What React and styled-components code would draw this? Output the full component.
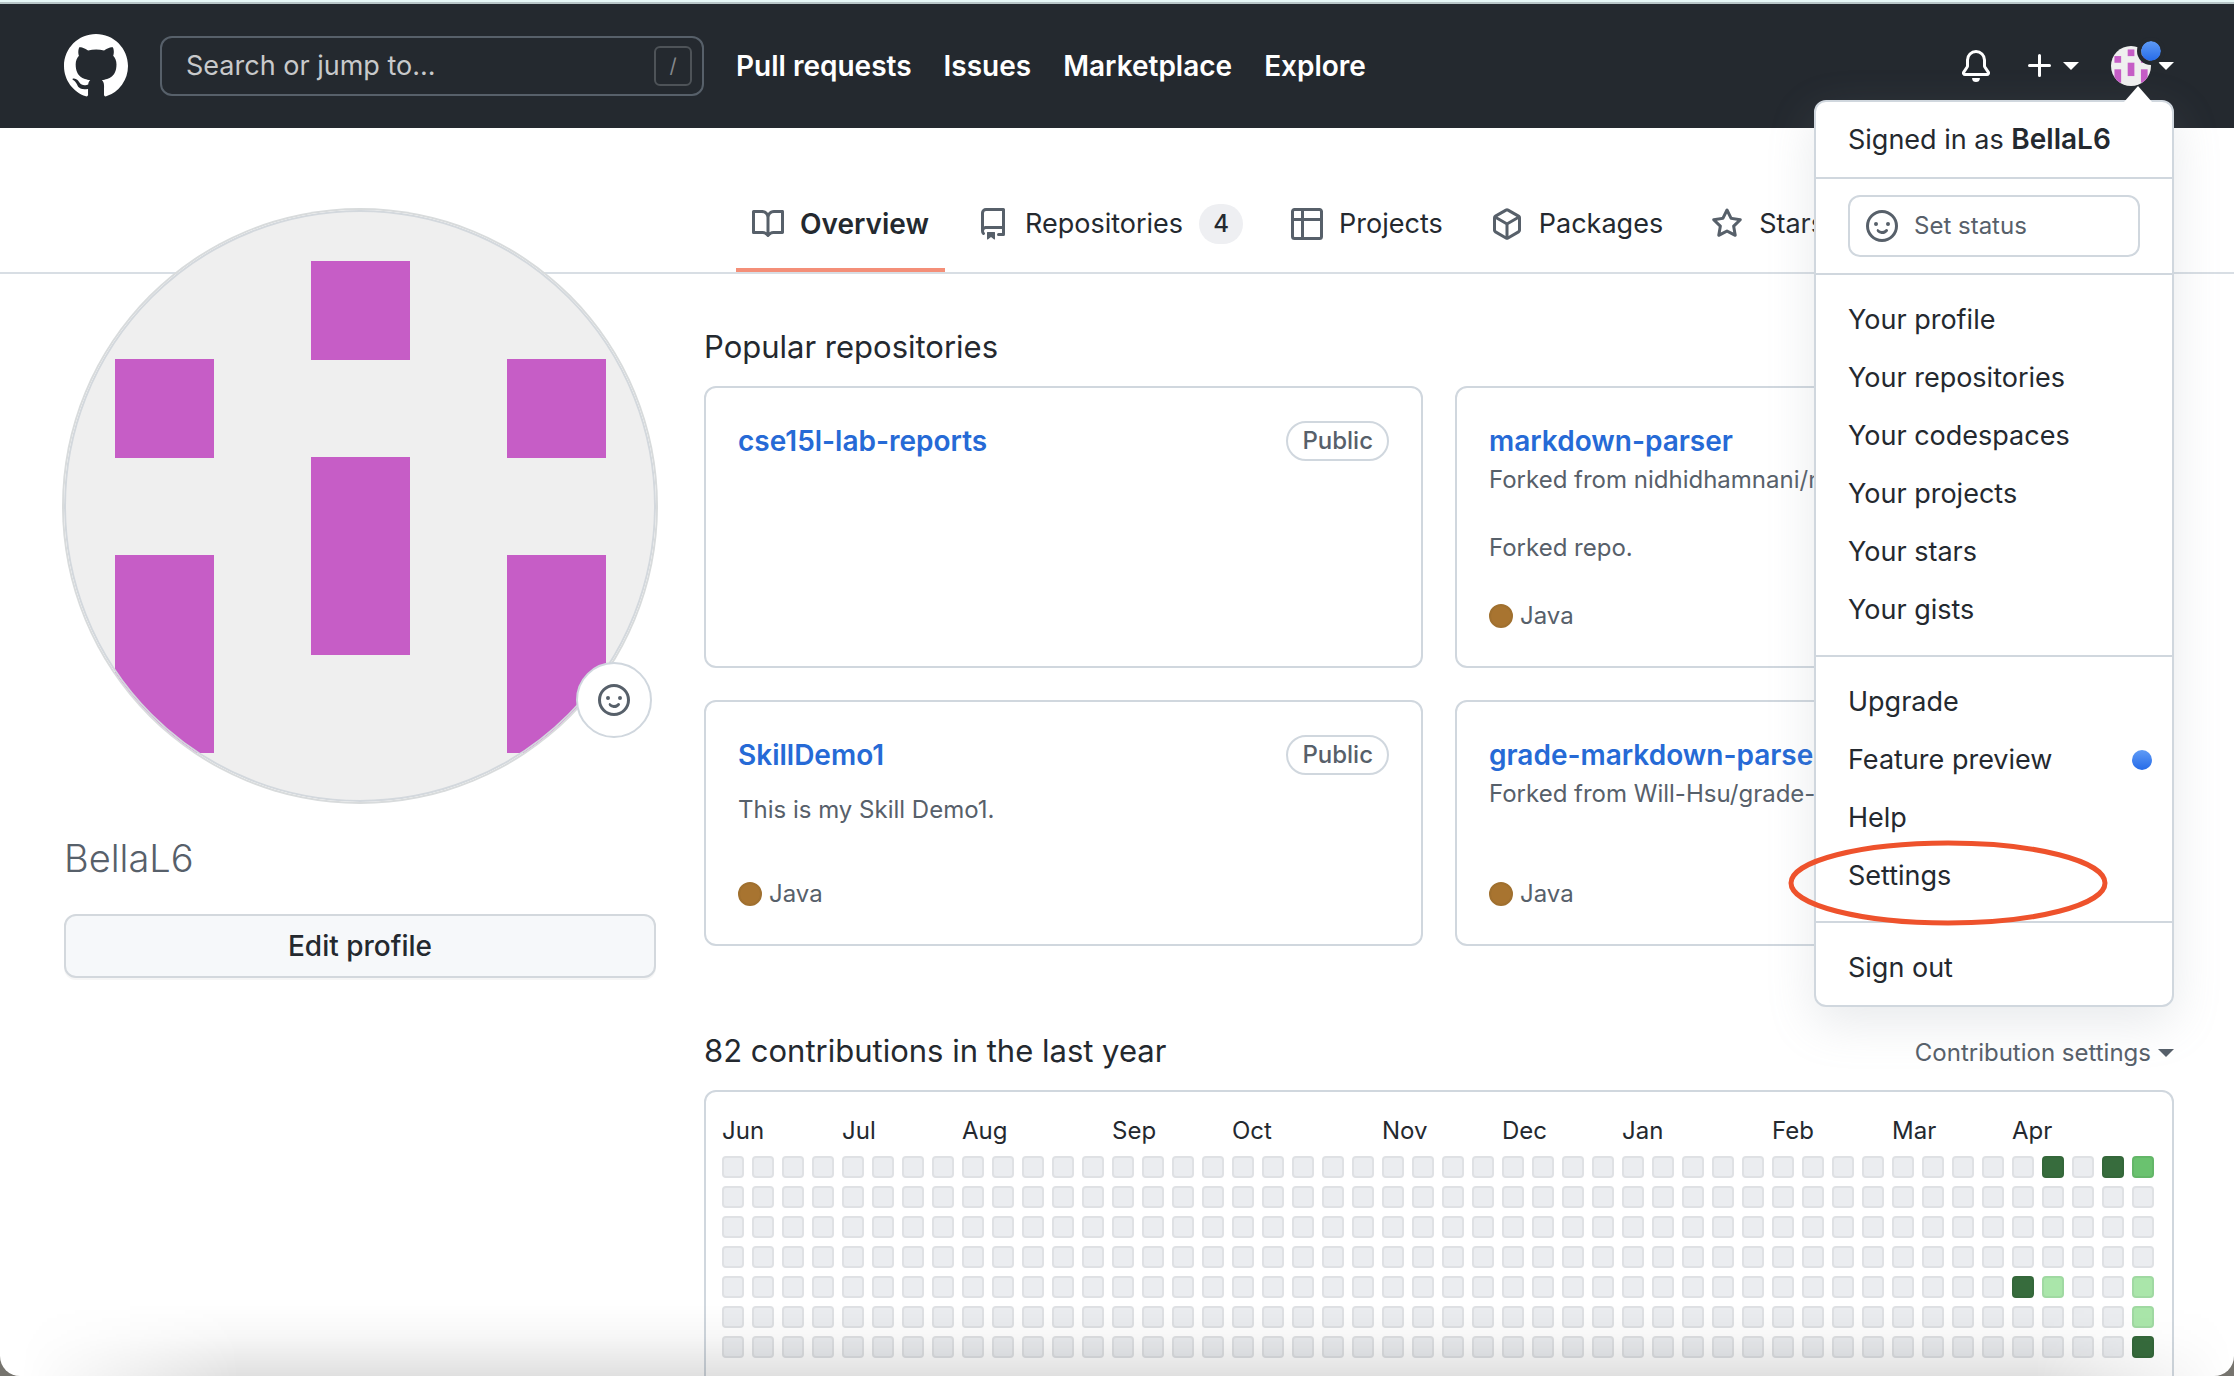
import React from "react";
import styled, { createGlobalStyle } from "styled-components";

const color = {
  ink: "#24292f",
  muted: "#57606a",
  line: "#d0d7de",
  link: "#266ad6",
  identicon: "#c65dc6",
};

const GlobalStyle = createGlobalStyle`
  *, *::before, *::after { box-sizing: border-box; }
  body {
    margin: 0;
    background: #76746e;
    color: ${color.ink};
    font-family: Inter, "Liberation Sans", sans-serif;
    font-size: 27px;
    line-height: 42px;
  }
  a { color: inherit; text-decoration: none; }
  button, input { font: inherit; color: inherit; }
  h1, h2, p, ul { margin: 0; padding: 0; font-weight: 400; }
  ul { list-style: none; }
`;

const Window = styled.div`
  position: relative;
  height: 100vh;
  overflow: hidden;
  background: #fff;
  border-radius: 0 0 20px 20px;
`;

const WindowShade = styled.div`
  position: absolute;
  left: 0;
  right: 0;
  bottom: 0;
  height: 72px;
  pointer-events: none;
  background: linear-gradient(rgba(0, 0, 0, 0), rgba(0, 0, 0, 0.03) 45%, rgba(0, 0, 0, 0.12));
  mask-image: linear-gradient(90deg, transparent 20px, #000 240px, #000 calc(100% - 200px), transparent);
`;

const Svg = styled.svg`
  display: block;
  flex: none;
  fill: currentColor;
`;

const paths = {
  mark: "M8 0C3.58 0 0 3.58 0 8c0 3.54 2.29 6.53 5.47 7.59.4.07.55-.17.55-.38 0-.19-.01-.82-.01-1.49-2.01.37-2.53-.49-2.69-.94-.09-.23-.48-.94-.82-1.13-.28-.15-.68-.52-.01-.53.63-.01 1.08.58 1.23.82.72 1.21 1.87.87 2.33.66.07-.52.28-.87.51-1.07-1.78-.2-3.64-.89-3.64-3.95 0-.87.31-1.59.82-2.15-.08-.2-.36-1.02.08-2.12 0 0 .67-.21 2.2.82.64-.18 1.32-.27 2-.27.68 0 1.36.09 2 .27 1.53-1.04 2.2-.82 2.2-.82.44 1.1.16 1.92.08 2.12.51.56.82 1.27.82 2.15 0 3.07-1.87 3.75-3.65 3.95.29.25.54.73.54 1.48 0 1.07-.01 1.93-.01 2.2 0 .21.15.46.55.38A8.013 8.013 0 0016 8c0-4.42-3.58-8-8-8z",
  book: "M0 1.75A.75.75 0 01.75 1h4.253c1.227 0 2.317.59 3 1.501A3.744 3.744 0 0111.006 1h4.245a.75.75 0 01.75.75v10.5a.75.75 0 01-.75.75h-4.507a2.25 2.25 0 00-1.591.659l-.622.621a.75.75 0 01-1.06 0l-.622-.621A2.25 2.25 0 005.258 13H.75a.75.75 0 01-.75-.75V1.75zm8.755 3a2.25 2.25 0 012.25-2.25H14.5v9h-3.757c-.71 0-1.4.201-1.992.572l.004-7.322zm-1.504 7.324l.004-5.073-.002-2.253A2.25 2.25 0 005.003 2.5H1.5v9h3.757a3.75 3.75 0 011.994.574z",
  repo: "M2 2.5A2.5 2.5 0 014.5 0h8.75a.75.75 0 01.75.75v12.5a.75.75 0 01-.75.75h-2.5a.75.75 0 110-1.5h1.75v-2h-8a1 1 0 00-.714 1.7.75.75 0 01-1.072 1.05A2.495 2.495 0 012 11.5v-9zm10.5-1V9h-8c-.356 0-.694.074-1 .208V2.5a1 1 0 011-1h8zM5 12.25v3.25a.25.25 0 00.4.2l1.45-1.087a.25.25 0 01.3 0L8.6 15.7a.25.25 0 00.4-.2v-3.25a.25.25 0 00-.25-.25h-3.5a.25.25 0 00-.25.25z",
  table: "M0 1.75C0 .784.784 0 1.75 0h12.5C15.216 0 16 .784 16 1.75v3.585a.746.746 0 010 .83v8.085A1.75 1.75 0 0114.25 16H6.309a.748.748 0 01-1.118 0H1.75A1.75 1.75 0 010 14.25V6.165a.746.746 0 010-.83V1.75zM1.5 6.5v7.75c0 .138.112.25.25.25H5v-8H1.5zM6.5 6.5v8h7.75a.25.25 0 00.25-.25V6.5h-8zM14.5 5V1.75a.25.25 0 00-.25-.25H6.5V5h8zM5 5V1.5H1.75a.25.25 0 00-.25.25V5H5z",
  package: "M8.878.392a1.75 1.75 0 00-1.756 0l-5.25 3.045A1.75 1.75 0 001 4.951v6.098c0 .624.332 1.2.872 1.514l5.25 3.045a1.75 1.75 0 001.756 0l5.25-3.045c.54-.313.872-.89.872-1.514V4.951c0-.624-.332-1.2-.872-1.514L8.878.392zM7.875 1.69a.25.25 0 01.25 0l4.63 2.685L8 7.133 3.245 4.375l4.63-2.685zM2.5 5.677v5.372c0 .09.047.171.125.216l4.625 2.683V8.432L2.5 5.677zm6.25 8.271l4.625-2.683a.25.25 0 00.125-.216V5.677L8.75 8.432v5.516z",
  star: "M8 .25a.75.75 0 01.673.418l1.882 3.815 4.21.612a.75.75 0 01.416 1.279l-3.046 2.97.719 4.192a.75.75 0 01-1.088.791L8 12.347l-3.766 1.98a.75.75 0 01-1.088-.79l.72-4.194L.818 6.374a.75.75 0 01.416-1.28l4.21-.611L7.327.668A.75.75 0 018 .25zm0 2.445L6.615 5.5a.75.75 0 01-.564.41l-3.097.45 2.24 2.184a.75.75 0 01.216.664l-.528 3.084 2.769-1.456a.75.75 0 01.698 0l2.77 1.456-.53-3.084a.75.75 0 01.216-.664l2.24-2.183-3.096-.45a.75.75 0 01-.564-.41L8 2.694v.001z",
  bell: "M8 16a2 2 0 001.985-1.75c.017-.137-.097-.25-.235-.25h-3.5c-.138 0-.252.113-.235.25A2 2 0 008 16zM8 1.5A3.5 3.5 0 004.5 5v2.947c0 .346-.102.683-.294.97l-1.703 2.556a.018.018 0 00-.003.01l.001.006c0 .002.002.004.004.006a.017.017 0 00.006.004l.007.001h10.964l.007-.001a.016.016 0 00.006-.004.016.016 0 00.004-.006l.001-.007a.017.017 0 00-.003-.01l-1.703-2.554a1.75 1.75 0 01-.294-.97V5A3.5 3.5 0 008 1.5zM3 5a5 5 0 0110 0v2.947c0 .05.015.098.042.139l1.703 2.555A1.518 1.518 0 0113.482 13H2.518a1.518 1.518 0 01-1.263-2.36l1.703-2.554A.25.25 0 003 7.947V5z",
  plus: "M7.75 2a.75.75 0 01.75.75V7h4.25a.75.75 0 110 1.5H8.5v4.25a.75.75 0 11-1.5 0V8.5H2.75a.75.75 0 010-1.5H7V2.75A.75.75 0 017.75 2z",
  smiley: "M1.5 8a6.5 6.5 0 1113 0 6.5 6.5 0 01-13 0zM8 0a8 8 0 100 16A8 8 0 008 0zM5 8a1 1 0 100-2 1 1 0 000 2zm7-1a1 1 0 11-2 0 1 1 0 012 0zM5.32 9.636a.75.75 0 011.038.175l.007.009c.103.118.22.222.35.31.264.178.683.37 1.285.37.602 0 1.02-.192 1.285-.371.13-.088.247-.192.35-.31l.007-.008a.75.75 0 111.222.87c-.1.14-.2.25-.34.38-.16.13-.2.18-.37.3-.63.418-1.05.629-1.807.629-.946 0-1.652-.308-2.126-.63a3.3 3.3 0 01-.715-.657l-.02-.03a.75.75 0 01.183-1.044z",
};

function Icon({ name, size = 32 }) {
  return (
    <Svg viewBox="0 0 16 16" width={size} height={size} fillRule="evenodd" aria-hidden="true">
      <path d={paths[name]} />
    </Svg>
  );
}

function Identicon({ size }) {
  return (
    <Svg viewBox="0 0 592 592" width={size} height={size} aria-hidden="true">
      <rect width="592" height="592" fill="#efefef" />
      <g fill={color.identicon}>
        <rect x="247" y="51" width="99" height="99" />
        <rect x="51" y="149" width="99" height="99" />
        <rect x="443" y="149" width="99" height="99" />
        <rect x="247" y="247" width="99" height="198" />
        <rect x="51" y="345" width="99" height="198" />
        <rect x="443" y="345" width="99" height="198" />
      </g>
    </Svg>
  );
}

const Caret = styled.span`
  flex: none;
  border: 8px solid transparent;
  border-top-color: currentColor;
  border-bottom: 0;
`;

const Header = styled.header`
  position: relative;
  z-index: 2;
  display: flex;
  align-items: center;
  gap: 32px;
  height: 128px;
  padding: 0 60px 0 64px;
  color: #fff;
  background: linear-gradient(#e6f7f6 0 2px, #b7c5c7 2px 4px, #24292f 4px);
  border-top: 4px solid transparent;
  background-origin: border-box;
`;

const Search = styled.label`
  display: flex;
  align-items: center;
  width: 544px;
  height: 60px;
  padding: 0 10px 0 24px;
  border: 2px solid #57606a;
  border-radius: 12px;
`;

const SearchInput = styled.input`
  flex: 1;
  min-width: 0;
  padding: 0;
  border: 0;
  outline: 0;
  background: none;
  &::placeholder { color: #c8c9cb; opacity: 1; }
`;

const Key = styled.kbd`
  display: grid;
  place-items: center;
  width: 38px;
  height: 40px;
  border: 2px solid #4e5358;
  border-radius: 6px;
  color: #84888c;
  font-family: inherit;
  font-size: 20px;
  line-height: 36px;
`;

const SiteNav = styled.nav`
  display: flex;
  gap: 32px;
  font-size: 28px;
  font-weight: 600;
`;

const Tools = styled.div`
  display: flex;
  align-items: center;
  gap: 32px;
  margin-left: auto;
`;

const ToolButton = styled.button`
  position: relative;
  display: flex;
  align-items: center;
  gap: 7px;
  padding: 0;
  border: 0;
  background: none;
  color: #fff;
`;

const SmallAvatar = styled.span`
  overflow: hidden;
  border-radius: 50%;
`;

const dotFill = "linear-gradient(#5f9bf6, #266be8)";

const Unread = styled.span`
  position: absolute;
  top: -9px;
  left: 26px;
  width: 28px;
  height: 28px;
  border: 4px solid #24292f;
  border-radius: 50%;
  background: ${dotFill} padding-box;
`;

const Menu = styled.div`
  position: absolute;
  top: 96px;
  right: 60px;
  width: 360px;
  border: 2px solid ${color.line};
  border-radius: 12px;
  background: #fff;
  color: ${color.ink};
  box-shadow: 0 16px 48px rgba(140, 149, 159, 0.2);
  &::before {
    content: "";
    position: absolute;
    top: -16px;
    right: 20px;
    border: 14px solid transparent;
    border-top: 0;
    border-bottom: 16px solid #fff;
  }
`;

const MenuSection = styled.div`
  padding: ${(p) => p.$pad};
  & + & { border-top: 2px solid ${color.line}; }
`;

const MenuItem = styled.a`
  display: flex;
  align-items: center;
  justify-content: space-between;
  padding: 8px 20px 8px 32px;
`;

const SignedIn = styled.p`
  padding: 8px 32px;
  strong {
    font-size: 28px;
    font-weight: 600;
  }
`;

const StatusButton = styled.button`
  display: flex;
  align-items: center;
  gap: 16px;
  width: 100%;
  height: 62px;
  padding: 0 16px;
  border: 2px solid ${color.line};
  border-radius: 12px;
  background: #fff;
  color: ${color.muted};
  font-size: 24px;
`;

const Dot = styled.span`
  width: 20px;
  height: 20px;
  border-radius: 50%;
  background: ${dotFill};
`;

const Circled = styled.svg`
  position: absolute;
  left: -28px;
  top: 738px;
  pointer-events: none;
`;

const TabBar = styled.nav`
  display: flex;
  align-items: flex-end;
  gap: 16px;
  height: 146px;
  padding-left: 736px;
  border-bottom: 2px solid #d8dee4;
`;

const Tab = styled.a`
  display: flex;
  align-items: center;
  gap: 16px;
  height: 96px;
  padding: 0 16px;
  border: solid transparent;
  border-width: 4px 0;
  border-bottom-color: ${(p) => (p.$active ? "#f48f78" : "transparent")};
  font-size: ${(p) => (p.$active ? 28 : 27)}px;
  font-weight: ${(p) => (p.$active ? 600 : 400)};
  svg { color: ${color.muted}; }
`;

const Counter = styled.span`
  min-width: 44px;
  padding: 0 12px;
  border-radius: 20px;
  background: #eeeff2;
  font-size: 24px;
  font-weight: 500;
  line-height: 40px;
  text-align: center;
`;

const Page = styled.main`
  display: grid;
  grid-template-columns: 592px minmax(0, 1fr);
  gap: 48px;
  padding: 0 60px 0 64px;
`;

const Profile = styled.aside`
  margin-top: -64px;
`;

const Portrait = styled.div`
  position: relative;
`;

const PortraitImage = styled.div`
  position: relative;
  overflow: hidden;
  border-radius: 50%;
  box-shadow: 0 0 0 2px #d8dbdc;
  &::after {
    content: "";
    position: absolute;
    inset: 0;
    border: 2px solid #d3d8dd;
    border-radius: 50%;
  }
`;

const Mood = styled.button`
  position: absolute;
  right: 4px;
  bottom: 64px;
  display: grid;
  place-items: center;
  width: 76px;
  height: 76px;
  padding: 0;
  border: 2px solid ${color.line};
  border-radius: 50%;
  background: #fff;
  color: ${color.muted};
`;

const UserName = styled.h1`
  padding: 32px 0;
  color: ${color.muted};
  font-size: 38px;
  font-weight: 300;
  line-height: 48px;
`;

const EditButton = styled.button`
  width: 100%;
  height: 64px;
  border: 2px solid #d3d8dd;
  border-radius: 12px;
  background: #f6f8fa;
  box-shadow: 0 2px 0 rgba(27, 31, 36, 0.04);
  font-size: 28px;
  font-weight: 500;
`;

const Content = styled.div`
  padding-top: 48px;
`;

const SectionTitle = styled.h2`
  font-size: 31px;
  line-height: 50px;
`;

const Cards = styled.ul`
  display: grid;
  grid-template-columns: repeat(2, minmax(0, 1fr));
  gap: 32px;
  margin: 14px 0 80px;
`;

const Card = styled.li`
  display: flex;
  flex-direction: column;
  padding: 32px;
  border: 2px solid ${color.line};
  border-radius: 12px;
  color: ${color.muted};
  font-size: 24px;
  line-height: 36px;
`;

const CardHead = styled.div`
  display: flex;
  align-items: center;
  justify-content: space-between;
  height: 42px;
`;

const RepoLink = styled.a`
  color: ${color.link};
  font-size: 28px;
  font-weight: 600;
`;

const Badge = styled.span`
  padding: 0 14px;
  border: 2px solid ${color.line};
  border-radius: 20px;
  font-weight: 500;
`;

const Forked = styled.p`
  margin-bottom: 16px;
  white-space: nowrap;
`;

const Description = styled.p`
  flex: 1;
  margin: 16px 0 32px;
`;

const Language = styled.p`
  display: flex;
  align-items: center;
  gap: 7px;
  &::before {
    content: "";
    width: 24px;
    height: 24px;
    border: 2px solid #a0702f;
    border-radius: 50%;
    background: #a87430;
  }
`;

const SectionHead = styled.div`
  display: flex;
  align-items: flex-end;
  justify-content: space-between;
`;

const QuietButton = styled.button`
  display: flex;
  align-items: center;
  gap: 7px;
  padding: 0;
  border: 0;
  background: none;
  color: ${color.muted};
  font-size: 24px;
  line-height: 46px;
`;

const CalendarBox = styled.div`
  margin-top: 14px;
  padding: 14px 8px 80px;
  border: 2px solid ${color.line};
  border-radius: 12px;
`;

const Calendar = styled.table`
  border-spacing: 8px;
  font-size: 24px;
  line-height: 34px;
  th {
    padding: 0;
    font-weight: 400;
    text-align: left;
  }
`;

const levels = [
  ["#ebedf0", "#dfe1e4"],
  ["#aae6aa", "#a0d9a2"],
  ["#6ac26f", "#63b668"],
  ["#376c3d", "#34673a"],
];

const Day = styled.td`
  width: 22px;
  min-width: 22px;
  height: 22px;
  padding: 0;
  border: 2px solid ${(p) => levels[p.$level][1]};
  border-radius: 4px;
  background: ${(p) => levels[p.$level][0]};
`;

const months = [
  ["Jun", 4], ["Jul", 4], ["Aug", 5], ["Sep", 4], ["Oct", 5], ["Nov", 4],
  ["Dec", 4], ["Jan", 5], ["Feb", 4], ["Mar", 4], ["Apr", 5],
];

const activity = {
  "0-44": 3, "0-46": 3, "0-47": 2,
  "4-43": 3, "4-44": 1, "4-47": 1,
  "5-47": 1, "6-47": 3,
};

const tabs = [
  { icon: "book", label: "Overview", active: true },
  { icon: "repo", label: "Repositories", count: 4 },
  { icon: "table", label: "Projects" },
  { icon: "package", label: "Packages" },
  { icon: "star", label: "Stars" },
];

const repos = [
  { name: "cse15l-lab-reports", badge: "Public" },
  { name: "markdown-parser", forked: "nidhidhamnani/m", text: "Forked repo.", language: "Java" },
  { name: "SkillDemo1", badge: "Public", text: "This is my Skill Demo1.", language: "Java" },
  { name: "grade-markdown-parse", forked: "Will-Hsu/grade-", language: "Java" },
];

const range = (n) => Array.from({ length: n }, (_, i) => i);

function AccountMenu() {
  return (
    <Menu>
      <MenuSection $pad="8px 0">
        <SignedIn>Signed in as <strong>BellaL6</strong></SignedIn>
      </MenuSection>
      <MenuSection $pad="16px 32px">
        <StatusButton type="button"><Icon name="smiley" />Set status</StatusButton>
      </MenuSection>
      <MenuSection $pad="16px 0">
        {["profile", "repositories", "codespaces", "projects", "stars", "gists"].map((item) => (
          <MenuItem key={item} href="#">{`Your ${item}`}</MenuItem>
        ))}
      </MenuSection>
      <MenuSection $pad="16px 0">
        <MenuItem href="#">Upgrade</MenuItem>
        <MenuItem href="#">Feature preview<Dot /></MenuItem>
        <MenuItem href="#">Help</MenuItem>
        <MenuItem href="#">Settings</MenuItem>
      </MenuSection>
      <MenuSection $pad="16px 0 8px">
        <MenuItem href="#">Sign out</MenuItem>
      </MenuSection>
      <Circled width="320" height="86" viewBox="0 0 320 86" aria-hidden="true">
        <ellipse cx="160" cy="43" rx="157" ry="40" fill="none" stroke="#ee522c" strokeWidth="5" />
      </Circled>
    </Menu>
  );
}

export default function App() {
  return (
    <Window>
      <GlobalStyle />
      <Header>
        <a href="#" aria-label="Homepage"><Icon name="mark" size={64} /></a>
        <Search>
          <SearchInput type="text" placeholder="Search or jump to..." aria-label="Search or jump to" />
          <Key>/</Key>
        </Search>
        <SiteNav>
          <a href="#">Pull requests</a>
          <a href="#">Issues</a>
          <a href="#">Marketplace</a>
          <a href="#">Explore</a>
        </SiteNav>
        <Tools>
          <ToolButton type="button" aria-label="Notifications"><Icon name="bell" /></ToolButton>
          <ToolButton type="button" aria-label="Create new"><Icon name="plus" /><Caret /></ToolButton>
          <ToolButton type="button" aria-label="Account">
            <SmallAvatar><Identicon size={40} /></SmallAvatar>
            <Unread />
            <Caret />
          </ToolButton>
        </Tools>
        <AccountMenu />
      </Header>

      <TabBar>
        {tabs.map((tab) => (
          <Tab key={tab.label} href="#" $active={tab.active}>
            <Icon name={tab.icon} />
            {tab.label}
            {tab.count && <Counter>{tab.count}</Counter>}
          </Tab>
        ))}
      </TabBar>

      <Page>
        <Profile>
          <Portrait>
            <PortraitImage><Identicon size={592} /></PortraitImage>
            <Mood type="button" aria-label="Set status"><Icon name="smiley" /></Mood>
          </Portrait>
          <UserName>BellaL6</UserName>
          <EditButton type="button">Edit profile</EditButton>
        </Profile>

        <Content>
          <SectionTitle>Popular repositories</SectionTitle>
          <Cards>
            {repos.map((repo) => (
              <Card key={repo.name}>
                <CardHead>
                  <RepoLink href="#">{repo.name}</RepoLink>
                  {repo.badge && <Badge>{repo.badge}</Badge>}
                </CardHead>
                {repo.forked && <Forked>Forked from {repo.forked}</Forked>}
                <Description>{repo.text}</Description>
                {repo.language && <Language>{repo.language}</Language>}
              </Card>
            ))}
          </Cards>

          <SectionHead>
            <SectionTitle>82 contributions in the last year</SectionTitle>
            <QuietButton type="button">Contribution settings<Caret /></QuietButton>
          </SectionHead>
          <CalendarBox>
            <Calendar>
              <thead>
                <tr>
                  {months.map(([name, weeks]) => <th key={name} colSpan={weeks}>{name}</th>)}
                </tr>
              </thead>
              <tbody>
                {range(7).map((day) => (
                  <tr key={day}>
                    {range(48).map((week) => (
                      <Day key={week} $level={activity[`${day}-${week}`] || 0} />
                    ))}
                  </tr>
                ))}
              </tbody>
            </Calendar>
          </CalendarBox>
        </Content>
      </Page>
      <WindowShade />
    </Window>
  );
}
